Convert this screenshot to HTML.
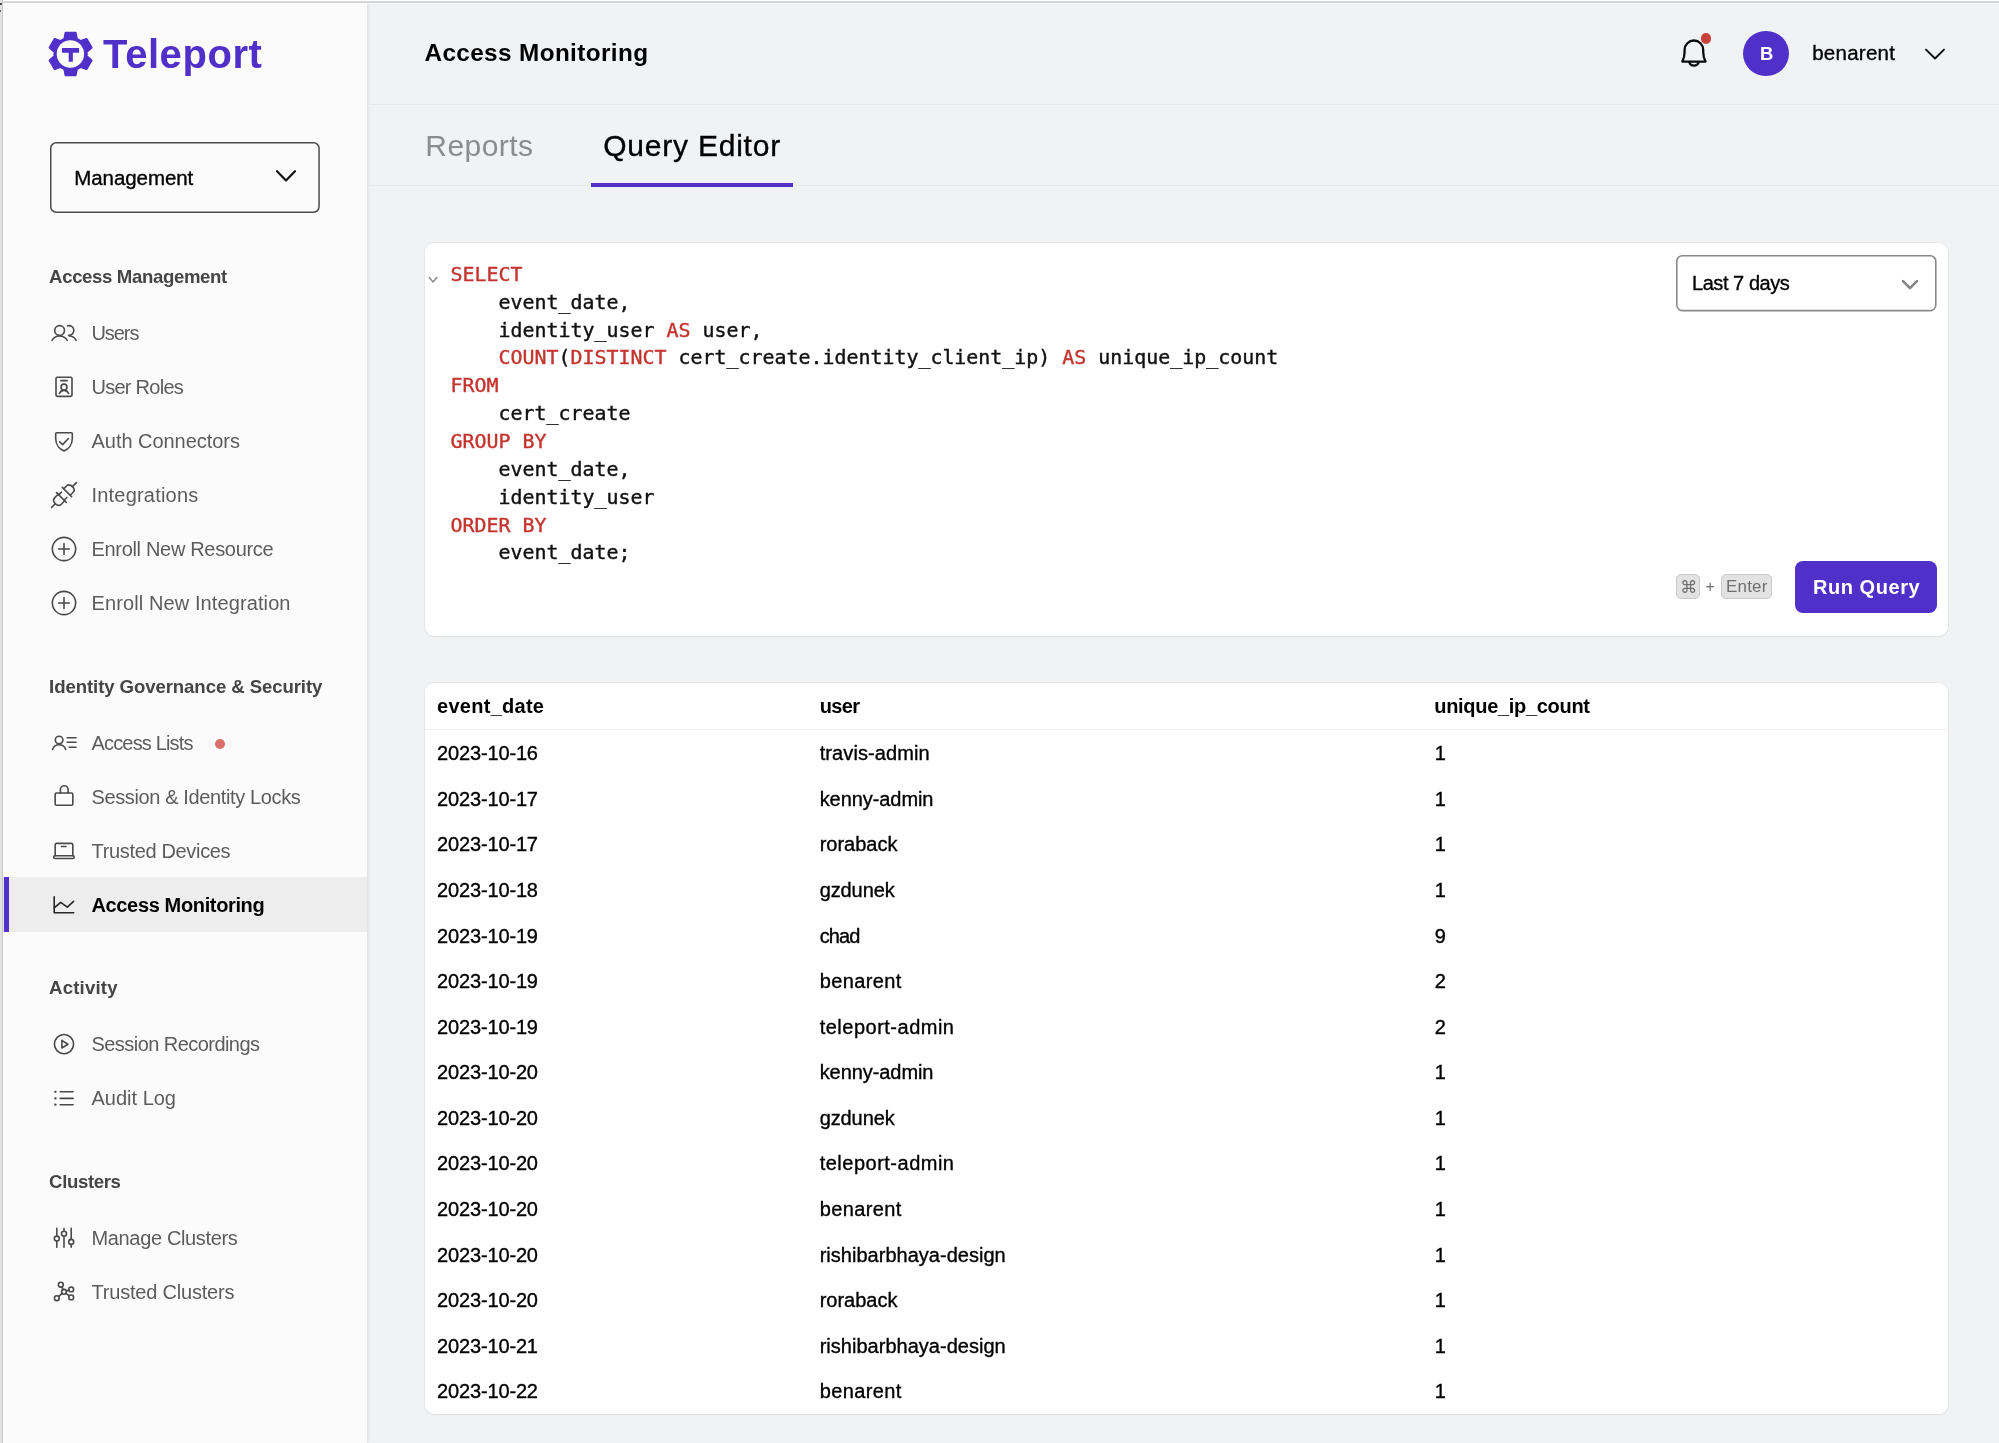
<!DOCTYPE html>
<html lang="en">
<head>
<meta charset="utf-8">
<title>Access Monitoring - Teleport</title>
<style>
html,body{margin:0;padding:0}
body{width:1999px;height:1443px;position:relative;overflow:hidden;background:#f1f2f4;font-family:'Liberation Sans', sans-serif;color:#000}
#app{position:absolute;left:0;top:0;width:1999px;height:1443px;will-change:transform}
.a{position:absolute}
.tx{position:absolute;white-space:pre;line-height:1;margin:0}
.ic{position:absolute;overflow:visible}
.k{-webkit-text-stroke:.35px #000}
#side{left:0;top:0;width:367px;height:1443px;background:#fbfbfc;box-shadow:1px 0 3px rgba(0,0,0,.1)}
.card{background:#fff;border-radius:9px;box-shadow:0 0 0 1px rgba(0,0,0,.035),0 1px 2px rgba(0,0,0,.06)}
.code{position:absolute;white-space:pre;font:19.93px/1 'DejaVu Sans Mono', 'Liberation Mono', monospace;color:#111;-webkit-text-stroke:.4px}
.code b{font-weight:400;color:#c4342e}
.kbd{background:#e2e2e2;border:1px solid #c9c9c9;border-radius:5px;box-sizing:border-box}
</style>
</head>
<body>
<div id="app">
<nav aria-label="Management navigation">
<div id="side" class="a"></div>
<div class="a" style="left:3px;top:877.4px;width:364px;height:54.4px;background:#ededee"></div>
<div class="a" style="left:3px;top:877.4px;width:6px;height:54.4px;background:#512fc9"></div>
<svg class="ic" style="left:48.00px;top:140.20px" width="273.80" height="75.00"><rect x="2.75" y="2.75" width="268.30" height="69.50" rx="5.5" fill="#fbfbfc" stroke="#4c4c4c" stroke-width="1.5"/></svg>
<svg class="ic" style="left:274.00px;top:163.50px" width="24" height="24" viewBox="0 0 24 24" fill="none" stroke="#111" stroke-width="2.2" stroke-linecap="round" stroke-linejoin="round" ><path d="M3 7.2l9 9.2 9-9.2"/></svg>
<svg class="ic" style="left:0;top:0" width="120" height="100" viewBox="0 0 120 100"><path d="M64.50 39.21L65.70 32.86L75.50 32.86L76.70 39.21A16.00 16.00 0 0 1 80.36 41.32L86.46 39.19L91.36 47.67L86.46 51.89A16.00 16.00 0 0 1 86.46 56.11L91.36 60.33L86.46 68.81L80.36 66.68A16.00 16.00 0 0 1 76.70 68.79L75.50 75.14L65.70 75.14L64.50 68.79A16.00 16.00 0 0 1 60.84 66.68L54.74 68.81L49.84 60.33L54.74 56.11A16.00 16.00 0 0 1 54.74 51.89L49.84 47.67L54.74 39.19L60.84 41.32A16.00 16.00 0 0 1 64.50 39.21Z" fill="#512fc9" stroke="#512fc9" stroke-width="2.4" stroke-linejoin="round"/><circle cx="70.4" cy="53.95" r="13.7" fill="#fbfbfc"/><path d="M62 48h17.1v4.7h-6.25v9.15h-4.15v-9.15h-6.7z" fill="#512fc9"/></svg>
<svg class="ic" style="left:48.00px;top:317.00px" width="32" height="32" viewBox="-16 -16 32 32" fill="none" stroke="#4a4a4a" stroke-width="1.6" stroke-linecap="round" stroke-linejoin="round"><circle cx="-4.4" cy="-2.5" r="4.9"/><path d="M-12 7.3C-10.4 4.4-7.7 3-4.4 3S1.6 4.4 3.2 7.3"/><path d="M3.6-7.2A4.9 4.9 0 1 1 4.6 2.4"/><path d="M5.4 3C8.4 3.2 10.8 4.7 12.1 7.3"/></svg>
<svg class="ic" style="left:48.00px;top:370.70px" width="32" height="32" viewBox="-16 -16 32 32" fill="none" stroke="#4a4a4a" stroke-width="1.6" stroke-linecap="round" stroke-linejoin="round"><rect x="-8" y="-9.8" width="16" height="19.2" rx="1.3"/><circle cx="0" cy="0.1" r="3"/><path d="M-4.6 6.4C-3.7 4.5-2 3.4 0 3.4s3.7 1.1 4.6 3"/><path d="M-3.2-6.4h6.4"/></svg>
<svg class="ic" style="left:48.00px;top:425.30px" width="32" height="32" viewBox="-16 -16 32 32" fill="none" stroke="#4a4a4a" stroke-width="1.6" stroke-linecap="round" stroke-linejoin="round"><path d="M-8.3-7.4q0-.9.9-.9H7.4q.9 0 .9.9v5.2C8.3 4.4 3.8 8.4 0 9.9-3.8 8.4-8.3 4.4-8.3-2.2z"/><path d="M-4.3.9l2.9 2.7 5.8-6.1"/></svg>
<svg class="ic" style="left:48.00px;top:479.20px" width="32" height="32" viewBox="-16 -16 32 32" fill="none" stroke="#4a4a4a" stroke-width="1.6" stroke-linecap="round" stroke-linejoin="round"><g transform="rotate(-45)"><path d="M-17.5 0H-12.3"/><path d="M-3.6-4.6H-8.4Q-12.3-4.6-12.3 0Q-12.3 4.6-8.4 4.6H-3.6"/><path d="M-3.6-7V7"/><path d="M-3.6-3.8H.2M-3.6 3.8H.2"/><path d="M4.2-6.6V6.6"/><path d="M4.2-4.6H8.1Q11.9-4.6 11.9 0Q11.9 4.6 8.1 4.6H4.2"/><path d="M11.9 0H17.5"/></g></svg>
<svg class="ic" style="left:48.00px;top:533.40px" width="32" height="32" viewBox="-16 -16 32 32" fill="none" stroke="#4a4a4a" stroke-width="1.6" stroke-linecap="round" stroke-linejoin="round"><circle cx="0" cy="0" r="11.65"/><path d="M-5.4 0H5.4M0-5.4V5.4"/></svg>
<svg class="ic" style="left:48.00px;top:587.40px" width="32" height="32" viewBox="-16 -16 32 32" fill="none" stroke="#4a4a4a" stroke-width="1.6" stroke-linecap="round" stroke-linejoin="round"><circle cx="0" cy="0" r="11.65"/><path d="M-5.4 0H5.4M0-5.4V5.4"/></svg>
<svg class="ic" style="left:48.00px;top:727.00px" width="32" height="32" viewBox="-16 -16 32 32" fill="none" stroke="#4a4a4a" stroke-width="1.6" stroke-linecap="round" stroke-linejoin="round"><circle cx="-4.9" cy="-3" r="3.8"/><path d="M-11.5 6.4C-10.4 3.3-8 1.8-4.9 1.8S.6 3.3 1.7 6.4"/><path d="M3.2-5.2H12M3.2-.7H12M5.2 4.3H12"/></svg>
<svg class="ic" style="left:48.00px;top:781.00px" width="32" height="32" viewBox="-16 -16 32 32" fill="none" stroke="#4a4a4a" stroke-width="1.6" stroke-linecap="round" stroke-linejoin="round"><rect x="-8.8" y="-4" width="17.6" height="12.2" rx="1.3"/><path d="M-3.6-4V-7.4a3.85 3.85 0 0 1 7.7 0V-4"/></svg>
<svg class="ic" style="left:48.00px;top:835.00px" width="32" height="32" viewBox="-16 -16 32 32" fill="none" stroke="#4a4a4a" stroke-width="1.6" stroke-linecap="round" stroke-linejoin="round"><path d="M-8.8 4.6V-6.2a1.4 1.4 0 0 1 1.4-1.4H7.4a1.4 1.4 0 0 1 1.4 1.4V4.6"/><rect x="-10.3" y="4.8" width="20.5" height="2.7" rx="1.3"/><path d="M-2.6-4.5H2"/></svg>
<svg class="ic" style="left:48.00px;top:889.00px" width="32" height="32" viewBox="-16 -16 32 32" fill="none" stroke="#262626" stroke-width="1.6" stroke-linecap="round" stroke-linejoin="round"><path d="M-9.8-8.2V7.8H9.7"/><path d="M-9.5 2.7L-3.3-2.7 3.3 2.1 9.6-3.6"/></svg>
<svg class="ic" style="left:48.00px;top:1028.00px" width="32" height="32" viewBox="-16 -16 32 32" fill="none" stroke="#4a4a4a" stroke-width="1.6" stroke-linecap="round" stroke-linejoin="round"><circle cx="0" cy="0.1" r="9.6"/><path d="M-2.1-3.6V4L3.9.2z"/></svg>
<svg class="ic" style="left:48.00px;top:1082.00px" width="32" height="32" viewBox="-16 -16 32 32" fill="none" stroke="#4a4a4a" stroke-width="1.6" stroke-linecap="round" stroke-linejoin="round"><path d="M-3.8-6.2H9.1M-3.8.4H9.1M-3.8 6.7H9.1"/><path d="M-8.7-6.2h.2M-8.7.4h.2M-8.7 6.7h.2" stroke-width="2.3"/></svg>
<svg class="ic" style="left:48.00px;top:1222.00px" width="32" height="32" viewBox="-16 -16 32 32" fill="none" stroke="#4a4a4a" stroke-width="1.6" stroke-linecap="round" stroke-linejoin="round"><path d="M-7.2-9.6V-2M-7.2 3.2V9.2M0-9.6V-6.8M0-1.7V9.2M7.2-9.6V1.4M7.2 6.4V9.2"/><circle cx="-7.2" cy=".6" r="2.5"/><circle cx="0" cy="-4.25" r="2.5"/><circle cx="7.2" cy="3.9" r="2.5"/></svg>
<svg class="ic" style="left:48.00px;top:1276.00px" width="32" height="32" viewBox="-16 -16 32 32" fill="none" stroke="#4a4a4a" stroke-width="1.6" stroke-linecap="round" stroke-linejoin="round"><circle cx="-3.2" cy="-7.3" r="2.4"/><circle cx="0" cy="-.2" r="2.4"/><circle cx="7.2" cy="-2.6" r="2.4"/><circle cx="7.2" cy="5.4" r="2.4"/><circle cx="-7.2" cy="6.2" r="2.4"/><path d="M-2.2-5.1l1.2 2.7M2.3-1l2.6-.9M1.9 1.3l3.4 2.6M-1.8 1.4l-3.6 3.2"/></svg>
<div class="a" style="left:215.4px;top:739.2px;width:10px;height:10px;border-radius:50%;background:#da6f6b"></div>
<div class="tx" style="left:103.10px;top:34.14px;font-size:40px;font-weight:700;color:#512fc9;letter-spacing:0.567px;">Teleport</div>
<div class="tx k" style="left:74.30px;top:167.95px;font-size:20.5px;letter-spacing:-0.075px;">Management</div>
<div class="tx" style="left:49.10px;top:268.06px;font-size:18.6px;font-weight:700;color:#454545;letter-spacing:-0.360px;">Access Management</div>
<div class="tx" style="left:49.10px;top:677.86px;font-size:18.6px;font-weight:700;color:#454545;letter-spacing:-0.090px;">Identity Governance &amp; Security</div>
<div class="tx" style="left:49.10px;top:979.46px;font-size:18.6px;font-weight:700;color:#454545;letter-spacing:0.175px;">Activity</div>
<div class="tx" style="left:49.10px;top:1173.16px;font-size:18.6px;font-weight:700;color:#454545;letter-spacing:-0.372px;">Clusters</div>
<div class="tx" style="left:91.50px;top:323.47px;font-size:20px;color:#5c5c5c;letter-spacing:-1.084px;">Users</div>
<div class="tx" style="left:91.50px;top:377.47px;font-size:20px;color:#5c5c5c;letter-spacing:-0.736px;">User Roles</div>
<div class="tx" style="left:91.50px;top:431.47px;font-size:20px;color:#5c5c5c;letter-spacing:-0.035px;">Auth Connectors</div>
<div class="tx" style="left:91.50px;top:485.47px;font-size:20px;color:#5c5c5c;letter-spacing:0.199px;">Integrations</div>
<div class="tx" style="left:91.50px;top:539.47px;font-size:20px;color:#5c5c5c;letter-spacing:-0.320px;">Enroll New Resource</div>
<div class="tx" style="left:91.50px;top:593.47px;font-size:20px;color:#5c5c5c;letter-spacing:0.106px;">Enroll New Integration</div>
<div class="tx" style="left:91.50px;top:733.47px;font-size:20px;color:#5c5c5c;letter-spacing:-0.832px;">Access Lists</div>
<div class="tx" style="left:91.50px;top:787.47px;font-size:20px;color:#5c5c5c;letter-spacing:-0.374px;">Session &amp; Identity Locks</div>
<div class="tx" style="left:91.50px;top:841.47px;font-size:20px;color:#5c5c5c;letter-spacing:-0.332px;">Trusted Devices</div>
<div class="tx" style="left:91.50px;top:1034.47px;font-size:20px;color:#5c5c5c;letter-spacing:-0.551px;">Session Recordings</div>
<div class="tx" style="left:91.50px;top:1088.47px;font-size:20px;color:#5c5c5c;letter-spacing:-0.002px;">Audit Log</div>
<div class="tx" style="left:91.50px;top:1228.47px;font-size:20px;color:#5c5c5c;letter-spacing:-0.349px;">Manage Clusters</div>
<div class="tx" style="left:91.50px;top:1282.47px;font-size:20px;color:#5c5c5c;letter-spacing:-0.198px;">Trusted Clusters</div>
<div class="tx" style="left:91.50px;top:895.27px;font-size:20px;font-weight:700;letter-spacing:-0.358px;">Access Monitoring</div>
</nav>
<header>
<div class="a" style="left:368px;top:103.5px;width:1631px;height:1px;background:#e7e8eb"></div>
<div class="a" style="left:368px;top:185px;width:1631px;height:1px;background:#e7e8eb"></div>
<div class="a" style="left:591px;top:183px;width:201.5px;height:3.5px;background:#512fc9"></div>
<svg class="ic" style="left:1674.00px;top:33.00px" width="40" height="40" viewBox="-20 -20 40 40" fill="none" stroke="#0a0a0a" stroke-width="2.3" stroke-linecap="round" stroke-linejoin="round"><path d="M-11.7 8.6C-10 5.5-9.4 2-9.4-1.5V-3.2a9.3 9.3 0 0 1 18.6 0v1.7c0 3.5.6 7 2.3 10.1z"/><path d="M-4.7 9.1a4.8 4.5 0 0 0 9.4 0"/></svg>
<div class="a" style="left:1700.64px;top:33.15px;width:10.4px;height:10.4px;border-radius:50%;background:#c7403a"></div>
<div class="a" style="left:1743.1px;top:30.5px;width:45.7px;height:45.7px;border-radius:50%;background:#512fc9"></div>
<svg class="ic" style="left:1918.90px;top:38.00px" width="32" height="32" viewBox="-16 -16 32 32" fill="none" stroke="#111" stroke-width="1.9" stroke-linecap="round" stroke-linejoin="round"><path d="M-9-4.4L0 4.5 9-4.4"/></svg>
<div class="tx" style="left:424.50px;top:41.43px;font-size:24.3px;font-weight:700;letter-spacing:0.384px;">Access Monitoring</div>
<div class="tx k" style="left:1812.20px;top:43.45px;font-size:20.5px;letter-spacing:0.266px;">benarent</div>
<div class="tx" style="left:1760.00px;top:45.32px;font-size:18.4px;font-weight:700;color:#fff;">B</div>
<div class="tx" style="left:425.30px;top:130.80px;font-size:30px;color:#8c8c8c;letter-spacing:0.442px;">Reports</div>
<div class="tx k" style="left:603.20px;top:130.80px;font-size:30px;letter-spacing:0.781px;">Query Editor</div>
</header>
<main>
<section aria-label="Query editor">
<div class="a card" style="left:425.2px;top:242.5px;width:1523.2px;height:393px"></div>
<svg class="ic" style="left:1674.40px;top:253.00px" width="264.60" height="60.40"><rect x="2.80" y="2.80" width="259.00" height="54.80" rx="5.5" fill="#fff" stroke="#8a8a8a" stroke-width="1.6"/></svg>
<svg class="ic" style="left:1898.00px;top:272.00px" width="24" height="24" viewBox="0 0 24 24" fill="none" stroke="#858585" stroke-width="2.6" stroke-linecap="round" stroke-linejoin="round" ><path d="M5 9.2l7 7 7-7"/></svg>
<svg class="ic" style="left:426.80px;top:273.60px" width="12" height="12" viewBox="0 0 12 12" fill="none" stroke="#8a8a8a" stroke-width="1.5" stroke-linecap="round" stroke-linejoin="round" ><path d="M2.2 3.6l3.8 4.4 3.8-4.4"/></svg>
<div class="code" style="left:450.6px;top:264.89px"><b>SELECT</b></div>
<div class="code" style="left:450.6px;top:292.74px">    event_date,</div>
<div class="code" style="left:450.6px;top:320.59px">    identity_user <b>AS</b> user,</div>
<div class="code" style="left:450.6px;top:348.44px">    <b>COUNT</b>(<b>DISTINCT</b> cert_create.identity_client_ip) <b>AS</b> unique_ip_count</div>
<div class="code" style="left:450.6px;top:376.29px"><b>FROM</b></div>
<div class="code" style="left:450.6px;top:404.14px">    cert_create</div>
<div class="code" style="left:450.6px;top:431.99px"><b>GROUP BY</b></div>
<div class="code" style="left:450.6px;top:459.84px">    event_date,</div>
<div class="code" style="left:450.6px;top:487.69px">    identity_user</div>
<div class="code" style="left:450.6px;top:515.54px"><b>ORDER BY</b></div>
<div class="code" style="left:450.6px;top:543.39px">    event_date;</div>
<div class="a kbd" style="left:1676.4px;top:574.4px;width:23.6px;height:25px"></div>
<div class="a kbd" style="left:1721.4px;top:574.4px;width:50.8px;height:25px"></div>
<div class="a" style="left:1795.4px;top:561.2px;width:141.8px;height:51.4px;border-radius:8px;background:#512fc9"></div>
<div class="tx k" style="left:1692.00px;top:273.07px;font-size:20px;letter-spacing:-0.450px;">Last 7 days</div>
<div class="tx" style="left:1680.20px;top:578.62px;font-size:17px;color:#6f6f6f;font-family:'DejaVu Sans', sans-serif;">⌘</div>
<div class="tx" style="left:1705.60px;top:578.96px;font-size:16px;color:#6f6f6f;">+</div>
<div class="tx" style="left:1726.00px;top:578.21px;font-size:17px;color:#6f6f6f;letter-spacing:0.190px;">Enter</div>
<div class="tx" style="left:1813.00px;top:577.07px;font-size:20px;font-weight:700;color:#fff;letter-spacing:0.544px;">Run Query</div>
</section>
<section aria-label="Query results">
<div class="a card" style="left:425.2px;top:682.7px;width:1523.2px;height:731px"></div>
<div class="a" style="left:425px;top:729.2px;width:1524px;height:1.2px;background:#eeeef0"></div>
<div class="tx" style="left:437.00px;top:696.27px;font-size:20px;font-weight:700;letter-spacing:0.278px;">event_date</div>
<div class="tx" style="left:819.70px;top:696.27px;font-size:20px;font-weight:700;letter-spacing:-0.650px;">user</div>
<div class="tx" style="left:1434.30px;top:696.27px;font-size:20px;font-weight:700;letter-spacing:-0.307px;">unique_ip_count</div>
<div class="tx k" style="left:437.00px;top:743.37px;font-size:20px;letter-spacing:-0.146px;">2023-10-16</div>
<div class="tx k" style="left:819.70px;top:743.37px;font-size:20px;letter-spacing:0.098px;">travis-admin</div>
<div class="tx k" style="left:1434.70px;top:743.37px;font-size:20px;">1</div>
<div class="tx k" style="left:437.00px;top:788.93px;font-size:20px;letter-spacing:-0.146px;">2023-10-17</div>
<div class="tx k" style="left:819.70px;top:788.93px;font-size:20px;letter-spacing:-0.072px;">kenny-admin</div>
<div class="tx k" style="left:1434.70px;top:788.93px;font-size:20px;">1</div>
<div class="tx k" style="left:437.00px;top:834.48px;font-size:20px;letter-spacing:-0.146px;">2023-10-17</div>
<div class="tx k" style="left:819.70px;top:834.48px;font-size:20px;letter-spacing:-0.016px;">roraback</div>
<div class="tx k" style="left:1434.70px;top:834.48px;font-size:20px;">1</div>
<div class="tx k" style="left:437.00px;top:880.04px;font-size:20px;letter-spacing:-0.146px;">2023-10-18</div>
<div class="tx k" style="left:819.70px;top:880.04px;font-size:20px;letter-spacing:-0.104px;">gzdunek</div>
<div class="tx k" style="left:1434.70px;top:880.04px;font-size:20px;">1</div>
<div class="tx k" style="left:437.00px;top:925.60px;font-size:20px;letter-spacing:-0.146px;">2023-10-19</div>
<div class="tx k" style="left:819.70px;top:925.60px;font-size:20px;letter-spacing:-0.858px;">chad</div>
<div class="tx k" style="left:1434.70px;top:925.60px;font-size:20px;">9</div>
<div class="tx k" style="left:437.00px;top:971.16px;font-size:20px;letter-spacing:-0.146px;">2023-10-19</div>
<div class="tx k" style="left:819.70px;top:971.16px;font-size:20px;letter-spacing:0.376px;">benarent</div>
<div class="tx k" style="left:1434.70px;top:971.16px;font-size:20px;">2</div>
<div class="tx k" style="left:437.00px;top:1016.71px;font-size:20px;letter-spacing:-0.146px;">2023-10-19</div>
<div class="tx k" style="left:819.70px;top:1016.71px;font-size:20px;letter-spacing:0.497px;">teleport-admin</div>
<div class="tx k" style="left:1434.70px;top:1016.71px;font-size:20px;">2</div>
<div class="tx k" style="left:437.00px;top:1062.27px;font-size:20px;letter-spacing:-0.146px;">2023-10-20</div>
<div class="tx k" style="left:819.70px;top:1062.27px;font-size:20px;letter-spacing:-0.072px;">kenny-admin</div>
<div class="tx k" style="left:1434.70px;top:1062.27px;font-size:20px;">1</div>
<div class="tx k" style="left:437.00px;top:1107.83px;font-size:20px;letter-spacing:-0.146px;">2023-10-20</div>
<div class="tx k" style="left:819.70px;top:1107.83px;font-size:20px;letter-spacing:-0.104px;">gzdunek</div>
<div class="tx k" style="left:1434.70px;top:1107.83px;font-size:20px;">1</div>
<div class="tx k" style="left:437.00px;top:1153.38px;font-size:20px;letter-spacing:-0.146px;">2023-10-20</div>
<div class="tx k" style="left:819.70px;top:1153.38px;font-size:20px;letter-spacing:0.497px;">teleport-admin</div>
<div class="tx k" style="left:1434.70px;top:1153.38px;font-size:20px;">1</div>
<div class="tx k" style="left:437.00px;top:1198.94px;font-size:20px;letter-spacing:-0.146px;">2023-10-20</div>
<div class="tx k" style="left:819.70px;top:1198.94px;font-size:20px;letter-spacing:0.376px;">benarent</div>
<div class="tx k" style="left:1434.70px;top:1198.94px;font-size:20px;">1</div>
<div class="tx k" style="left:437.00px;top:1244.50px;font-size:20px;letter-spacing:-0.146px;">2023-10-20</div>
<div class="tx k" style="left:819.70px;top:1244.50px;font-size:20px;letter-spacing:0.017px;">rishibarbhaya-design</div>
<div class="tx k" style="left:1434.70px;top:1244.50px;font-size:20px;">1</div>
<div class="tx k" style="left:437.00px;top:1290.05px;font-size:20px;letter-spacing:-0.146px;">2023-10-20</div>
<div class="tx k" style="left:819.70px;top:1290.05px;font-size:20px;letter-spacing:-0.016px;">roraback</div>
<div class="tx k" style="left:1434.70px;top:1290.05px;font-size:20px;">1</div>
<div class="tx k" style="left:437.00px;top:1335.61px;font-size:20px;letter-spacing:-0.146px;">2023-10-21</div>
<div class="tx k" style="left:819.70px;top:1335.61px;font-size:20px;letter-spacing:0.017px;">rishibarbhaya-design</div>
<div class="tx k" style="left:1434.70px;top:1335.61px;font-size:20px;">1</div>
<div class="tx k" style="left:437.00px;top:1381.17px;font-size:20px;letter-spacing:-0.146px;">2023-10-22</div>
<div class="tx k" style="left:819.70px;top:1381.17px;font-size:20px;letter-spacing:0.376px;">benarent</div>
<div class="tx k" style="left:1434.70px;top:1381.17px;font-size:20px;">1</div>
</section>
</main>
<div class="a" style="left:3px;top:3px;width:1996px;height:1px;background:#fff;opacity:.85"></div>
<div class="a" style="left:3px;top:3px;width:1px;height:1440px;background:#fff;opacity:.85"></div>
<div class="a" style="left:0;top:0;width:1999px;height:1px;background:#fff"></div>
<div class="a" style="left:0;top:1px;width:1999px;height:2px;background:linear-gradient(#dcdcdd,#cfcfd0)"></div>
<div class="a" style="left:0;top:0;width:2px;height:1443px;background:#e1e1e1"></div>
<div class="a" style="left:2px;top:0;width:1px;height:1443px;background:#c5c7ca"></div>
<div class="a" style="left:0;top:3.2px;width:2px;height:1.8px;background:#3a3a3a;border-radius:0 1px 1px 0"></div>
<div class="a" style="left:0;top:9.6px;width:1.2px;height:2.4px;background:#3a3a3a;border-radius:0 1px 1px 0"></div>
</div>
</body>
</html>
